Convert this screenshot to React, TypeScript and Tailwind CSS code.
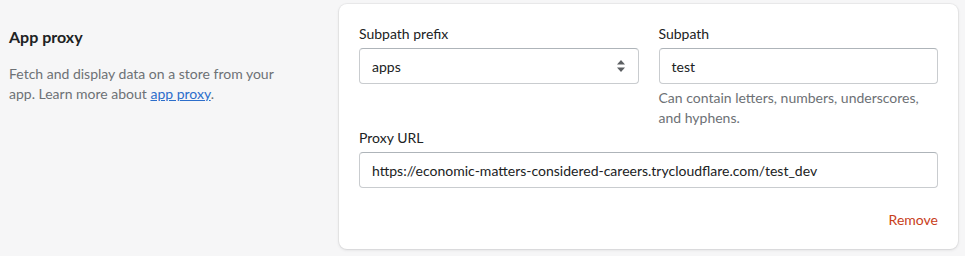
export default function App() {
  return (
    <div
      className="w-[965px] h-[256px] bg-[#f6f6f7] flex gap-[30px] overflow-hidden text-[#202223]"
      style={{ fontFamily: 'Lato, "Noto Sans", sans-serif' }}
    >
      <div className="w-[309px] shrink-0 pl-[9px] pt-[25px]">
        <h2 className="text-[16px] leading-[24px] font-bold">App proxy</h2>
        <p className="mt-[15px] text-[14px] leading-[20px] text-[#6d7175]">
          <span>Fetch and display data on a store from your</span>
          <br />
          <span>app. Learn more about</span>{' '}
          <a href="#" className="text-[#2c6ecb] underline">app proxy</a>
          <span>.</span>
        </p>
      </div>

      <div className="mt-[4px] w-[619px] shrink-0 h-[245px] bg-white rounded-lg shadow-[0_0_0_1px_rgba(63,63,68,0.05),0_1px_3px_0_rgba(63,63,68,0.15)] px-[20px] pt-[20px]">
        <div className="grid grid-cols-2 gap-x-[20px]">
          <div>
            <label className="block text-[14px] leading-[20px]">Subpath prefix</label>
            <div className="mt-[4px] h-[36px] rounded border border-[#c9cccf] border-t-[#aeb4b9] flex items-center justify-between pl-[12px] pr-[12px] text-[14px]">
              <span>apps</span>
              <svg width="10" height="14" viewBox="0 0 10 14" className="text-[#5c5f62]">
                <path d="M5 1 L9 5.5 H1 Z" fill="currentColor" />
                <path d="M5 13 L9 8.5 H1 Z" fill="currentColor" />
              </svg>
            </div>
          </div>
          <div>
            <label className="block text-[14px] leading-[20px]">Subpath</label>
            <div className="mt-[4px] h-[36px] rounded border border-[#c9cccf] border-t-[#aeb4b9] flex items-center px-[12px] text-[14px]">
              test
            </div>
            <p className="mt-[4px] text-[14px] leading-[20px] text-[#6d7175]">
              Can contain letters, numbers, underscores, and hyphens.
            </p>
          </div>
        </div>

        <label className="block text-[14px] leading-[20px]">Proxy URL</label>
        <div className="mt-[4px] h-[36px] rounded border border-[#c9cccf] border-t-[#aeb4b9] flex items-center px-[12px] text-[14px]">
          https://economic-matters-considered-careers.trycloudflare.com/test_dev
        </div>

        <div className="mt-[22px] flex justify-end">
          <button className="text-[14px] leading-[20px] text-[#c8401a]">Remove</button>
        </div>
      </div>
    </div>
  );
}
